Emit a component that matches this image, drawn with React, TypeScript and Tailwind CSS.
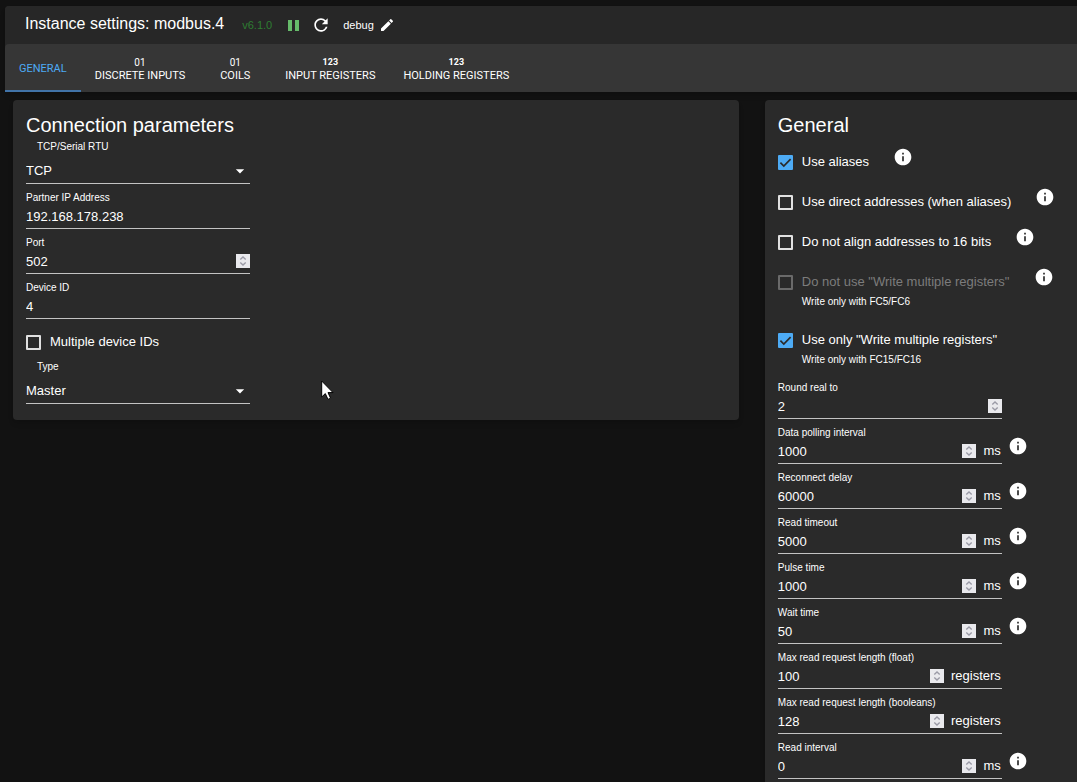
import React, { useState } from "react";
import { MdArrowDropDown, MdInfo, MdModeEdit, MdRefresh } from "react-icons/md";

interface NumberOption {
  id: string;
  label: string;
  value: string;
  unit?: string;
  info?: boolean;
}

const TABS = [
  { label: "GENERAL" },
  { label: "DISCRETE INPUTS", icon: "01" },
  { label: "COILS", icon: "01" },
  { label: "INPUT REGISTERS", icon: "123" },
  { label: "HOLDING REGISTERS", icon: "123" },
];

const GENERAL_OPTIONS: NumberOption[] = [
  { id: "round", label: "Round real to", value: "2" },
  { id: "poll", label: "Data polling interval", value: "1000", unit: "ms", info: true },
  { id: "recon", label: "Reconnect delay", value: "60000", unit: "ms", info: true },
  { id: "timeout", label: "Read timeout", value: "5000", unit: "ms", info: true },
  { id: "pulsetime", label: "Pulse time", value: "1000", unit: "ms", info: true },
  { id: "waitTime", label: "Wait time", value: "50", unit: "ms", info: true },
  { id: "maxBlock", label: "Max read request length (float)", value: "100", unit: "registers" },
  { id: "maxBoolBlock", label: "Max read request length (booleans)", value: "128", unit: "registers" },
  { id: "readInterval", label: "Read interval", value: "0", unit: "ms", info: true },
];

function InfoButton({ label }: { label: string }) {
  return (
    <button type="button" aria-label={`Info: ${label}`} className="shrink-0 text-white">
      <MdInfo size={20} />
    </button>
  );
}

function Spinner() {
  return (
    <svg width="14" height="14" viewBox="0 0 14 14" aria-hidden="true" className="shrink-0">
      <rect width="14" height="14" fill="#e9e9ed" />
      <path d="M4.3 5.4 L7 3 L9.7 5.4 M4.3 8.6 L7 11 L9.7 8.6" fill="none" stroke="#9a9aa6" strokeWidth="1.4" />
    </svg>
  );
}

interface FieldProps {
  id: string;
  label: string;
  value: string;
  type?: "text" | "number";
  unit?: string;
  info?: boolean;
}

function Field({ id, label, value, type = "text", unit, info }: FieldProps) {
  const [current, setCurrent] = useState(value);

  return (
    <div className="flex items-start gap-1.5">
      <div className="w-56 pt-2">
        <label htmlFor={id} className="block text-[10px] leading-3">
          {label}
        </label>
        <div className="flex h-[25px] items-center gap-[7px] border-b border-[#c3c3c3]">
          <input
            id={id}
            type={type}
            value={current}
            onChange={(e) => setCurrent(e.target.value)}
            className="h-6 w-full min-w-0 flex-1 bg-transparent text-[13px] outline-none [appearance:textfield] [&::-webkit-inner-spin-button]:appearance-none"
          />
          {type === "number" && <Spinner />}
          {unit && <span className="pr-px text-[13px]">{unit}</span>}
        </div>
      </div>
      {info && (
        <div className="pt-[17px]">
          <InfoButton label={label} />
        </div>
      )}
    </div>
  );
}

interface SelectFieldProps {
  id: string;
  label: string;
  options: string[];
}

function SelectField({ id, label, options }: SelectFieldProps) {
  return (
    <div className="w-56">
      <label htmlFor={id} className="block pl-[11px] text-[10px] leading-3">
        {label}
      </label>
      <div className="relative mt-1.5 h-[25px] border-b border-[#c3c3c3]">
        <select id={id} className="block h-6 w-full appearance-none bg-transparent text-[13px] outline-none">
          {options.map((option) => (
            <option key={option}>{option}</option>
          ))}
        </select>
        <MdArrowDropDown size={20} className="pointer-events-none absolute top-0.5 right-0" />
      </div>
    </div>
  );
}

interface CheckboxProps {
  label: string;
  defaultChecked?: boolean;
  disabled?: boolean;
  info?: boolean;
  help?: string;
}

function Checkbox({ label, defaultChecked, disabled, info, help }: CheckboxProps) {
  return (
    <div>
      <div className="flex items-start gap-6">
        <label
          className={`flex h-10 items-center gap-[9px] text-[13px] whitespace-nowrap ${disabled ? "text-[#7c7c7c]" : ""}`}
        >
          <span className="relative size-[15px]">
            <input
              type="checkbox"
              defaultChecked={defaultChecked}
              disabled={disabled}
              className="peer block size-[15px] appearance-none rounded-[1px] border-2 border-[#e0e0e0] checked:border-[#4dabf5] checked:bg-[#4dabf5] disabled:border-[#6a6a6a]"
            />
            <svg
              viewBox="0 0 15 15"
              className="pointer-events-none absolute inset-0 hidden size-[15px] peer-checked:block"
              aria-hidden="true"
            >
              <path d="M2.4 7.6 L5.8 11 L12.6 4.2" fill="none" stroke="#2a2a2a" strokeWidth="1.7" />
            </svg>
          </span>
          {label}
        </label>
        {info && (
          <div className="pt-[5px]">
            <InfoButton label={label} />
          </div>
        )}
      </div>
      {help && <p className="-mt-1.5 mb-3 pl-6 text-[10px] leading-3">{help}</p>}
    </div>
  );
}

function Header() {
  return (
    <header className="flex h-[38px] items-center bg-[#272727] pl-5">
      <h1 className="pb-0.5 text-base">Instance settings: modbus.4</h1>
      <span className="ml-[18px] text-[11px] text-[#2e7d32]">v6.1.0</span>
      <button type="button" aria-label="Pause instance" className="ml-4 text-[#66bb6a]">
        <svg width="11" height="11" viewBox="0 0 11 11" fill="currentColor" aria-hidden="true">
          <path d="M0 0 H4 V11 H0 Z M7 0 H11 V11 H7 Z" />
        </svg>
      </button>
      <button type="button" aria-label="Restart instance" className="ml-3">
        <MdRefresh size={20} />
      </button>
      <span className="ml-3 text-[11px]">debug</span>
      <button type="button" aria-label="Edit log level" className="ml-[5px]">
        <MdModeEdit size={16} />
      </button>
    </header>
  );
}

export default function App() {
  const [activeTab, setActiveTab] = useState("GENERAL");

  return (
    <div className="flex h-screen flex-col overflow-hidden bg-[#121212] pt-1.5 pl-[5px] font-['Liberation_Sans',Arial,sans-serif] text-white">
      <div className="shrink-0 overflow-hidden rounded-tl bg-[#272727] shadow-md">
        <Header />
        <nav role="tablist" className="flex h-12 rounded-tl bg-[#363636]">
          {TABS.map((tab) => (
            <button
              key={tab.label}
              type="button"
              role="tab"
              aria-selected={activeTab === tab.label}
              onClick={() => setActiveTab(tab.label)}
              className={`flex min-w-[72px] flex-col items-center justify-center border-b-2 px-3.5 pt-[3px] font-[Roboto,sans-serif] text-[11px] leading-[13px] whitespace-nowrap ${
                activeTab === tab.label ? "border-[#4173a8] text-[#4dabf5]" : "border-transparent"
              }`}
            >
              {tab.icon && (
                <span className={tab.icon === "123" ? "text-[9px] font-bold" : "text-[10px]"}>{tab.icon}</span>
              )}
              {tab.label}
            </button>
          ))}
        </nav>
      </div>

      <main className="grid min-h-0 flex-1 grid-cols-[minmax(0,93fr)_minmax(0,40fr)] items-start gap-[26px] overflow-y-auto pt-2 pl-2 [scrollbar-width:none]">
        <section className="relative rounded bg-[#2a2a2a] px-[13px] pt-3 pb-4 shadow-md">
          <h2 className="mb-[3px] text-xl leading-[26px]">Connection parameters</h2>
          <SelectField id="connection" label="TCP/Serial RTU" options={["TCP", "Serial RTU"]} />
          <Field id="bind" label="Partner IP Address" value="192.168.178.238" />
          <Field id="port" label="Port" value="502" type="number" />
          <Field id="deviceId" label="Device ID" value="4" />
          <div className="mt-[3px] -mb-px">
            <Checkbox label="Multiple device IDs" />
          </div>
          <SelectField id="slave" label="Type" options={["Master", "Slave"]} />

          {/* Mouse pointer */}
          <svg
            width="13"
            height="21"
            viewBox="0 0 13 21"
            className="pointer-events-none absolute top-[280px] left-[308px]"
            aria-hidden="true"
          >
            <path d="M0.7 1 V17 L4.3 13.6 L7 19.4 L9.6 18.2 L7 12.6 H12 Z" fill="#fff" stroke="#000" strokeWidth="1" />
          </svg>
        </section>

        <section className="rounded-l bg-[#2a2a2a] pt-3 pb-4 pl-[13px] shadow-md">
          <h2 className="mb-1 text-xl leading-[26px]">General</h2>
          <Checkbox label="Use aliases" defaultChecked info />
          <Checkbox label="Use direct addresses (when aliases)" info />
          <Checkbox label="Do not align addresses to 16 bits" info />
          <Checkbox label='Do not use "Write multiple registers"' disabled info help="Write only with FC5/FC6" />
          <Checkbox label='Use only "Write multiple registers"' defaultChecked help="Write only with FC15/FC16" />
          <div className="-mt-1">
            {GENERAL_OPTIONS.map((option) => (
              <Field key={option.id} type="number" {...option} />
            ))}
          </div>
        </section>
      </main>
    </div>
  );
}
